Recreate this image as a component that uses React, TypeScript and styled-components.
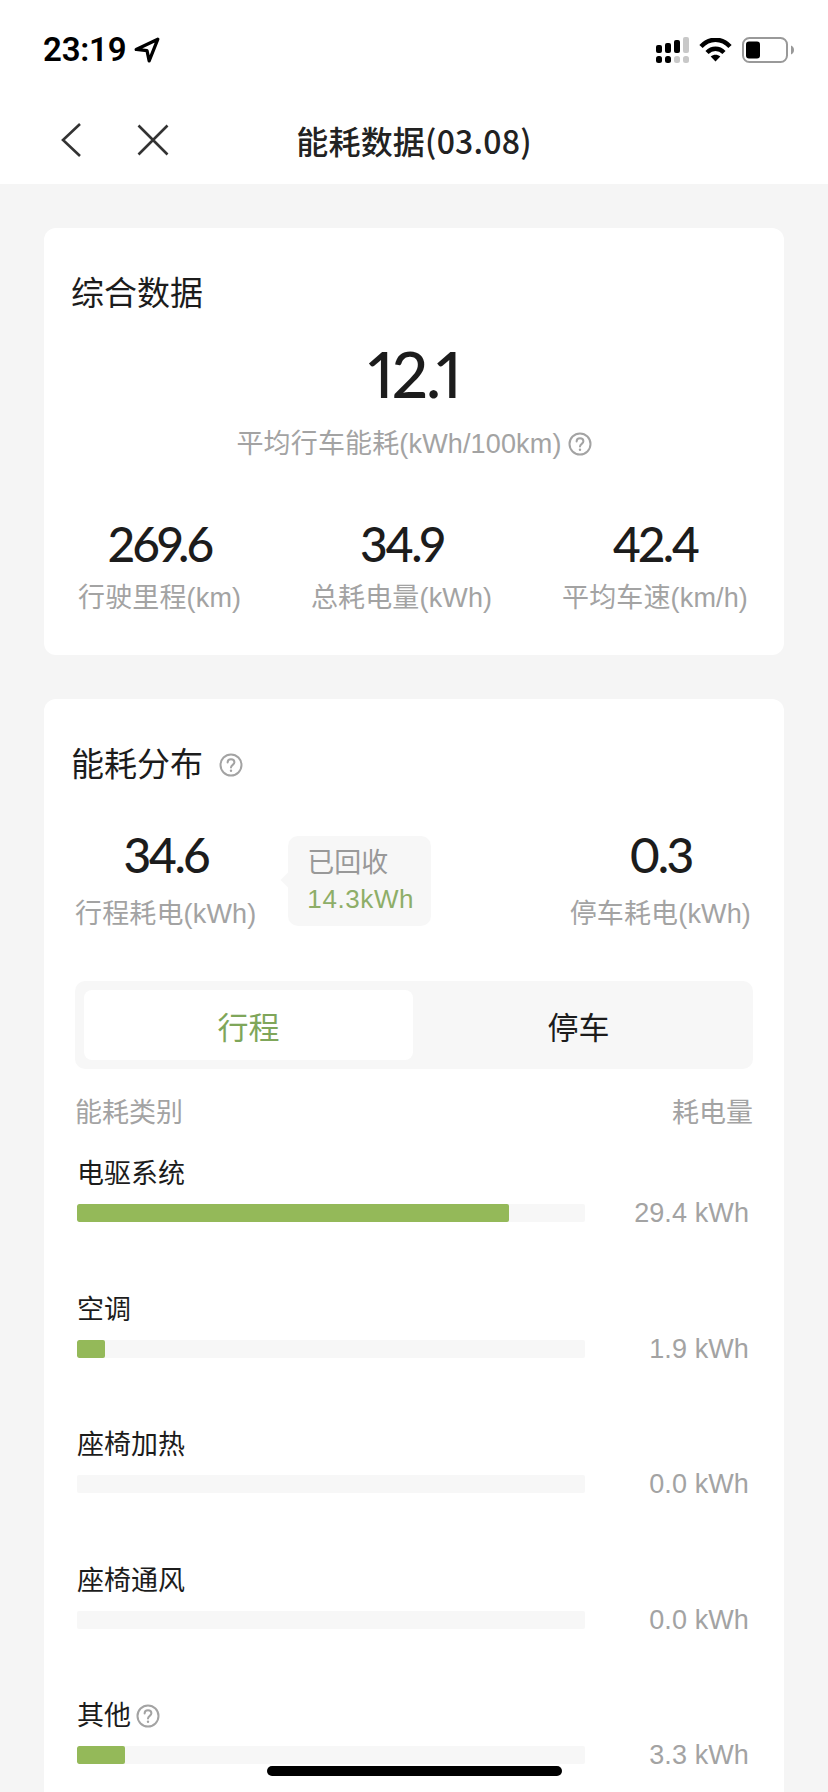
import React from "react";
import styled, { createGlobalStyle } from "styled-components";

const Global = createGlobalStyle`
  html, body { margin: 0; padding: 0; background: #f5f5f5; }
  body { font-family: "Liberation Sans", "Noto Sans CJK SC", sans-serif; color: #1c1c1c; }
  * { box-sizing: border-box; }
`;

const Screen = styled.div`
  position: relative;
  width: 828px;
  height: 1792px;
  overflow: hidden;
  background: #f5f5f5;
`;

const Header = styled.header`
  background: #fff;
  height: 184px;
  display: flex;
  flex-direction: column;
`;

const StatusBar = styled.div`
  height: 100px;
  padding: 32px 34px 0 43px;
  display: flex;
  justify-content: space-between;
  align-items: flex-start;
`;

const TimeGroup = styled.div`
  display: flex;
  align-items: center;
  gap: 8px;
  height: 36px;
`;

const Time = styled.span`
  font-family: Roboto, sans-serif;
  font-size: 33px;
  font-weight: 600;
  line-height: 36px;
  color: #000;
  letter-spacing: -0.2px;
`;

const StatusIcons = styled.div`
  display: flex;
  align-items: center;
  gap: 10px;
  height: 36px;
`;

const NavBar = styled.nav`
  flex: 1;
  display: grid;
  grid-template-columns: 1fr auto 1fr;
  align-items: center;
  padding-bottom: 4px;
`;

const NavActions = styled.div`
  display: flex;
  align-items: center;
  gap: 56px;
  padding-left: 61px;
`;

const NavTitle = styled.h1`
  margin: 0;
  font-family: "Noto Sans CJK SC", sans-serif;
  font-size: 32px;
  line-height: 44px;
  font-weight: 500;
  letter-spacing: 0.2px;
  color: #222;
`;

const Content = styled.main`
  padding: 44px 44px 0;
  display: flex;
  flex-direction: column;
  gap: 44px;
`;

const Card = styled.section`
  background: #fff;
  border-radius: 12px;
  padding: 44px 0 80px;
`;

const SummaryCard = styled(Card)`
  height: 427px;
`;

const SectionTitle = styled.h2`
  margin: 0;
  padding-left: 27px;
  display: flex;
  align-items: center;
  gap: 16px;
  font-size: 33px;
  line-height: 44px;
  font-weight: 400;
  color: #1c1c1c;
`;

const Headline = styled.div`
  margin-top: 22px;
  display: flex;
  flex-direction: column;
  align-items: center;
  gap: 16px;
`;

const BigNumber = styled.div`
  font-family: Lato, sans-serif;
  font-size: 64px;
  line-height: 72px;
  font-weight: 500;
  letter-spacing: -2px;
  font-feature-settings: "pnum";
  color: #1c1c1c;
`;

const Caption = styled.div`
  font-size: 27px;
  line-height: 36px;
  letter-spacing: 0.15px;
  color: #a3a3a3;
  white-space: nowrap;
  display: flex;
  align-items: center;
  gap: 6px;
`;

const Number = styled.div`
  font-family: Lato, sans-serif;
  font-size: 48px;
  line-height: 56px;
  font-weight: 500;
  letter-spacing: -2.6px;
  font-feature-settings: "pnum";
  color: #1c1c1c;
`;

const StatsRow = styled.div`
  margin-top: 54px;
  padding: 0 36px 0 34px;
  display: flex;
  justify-content: space-between;
`;

const Stat = styled.div`
  display: flex;
  flex-direction: column;
  align-items: center;
  gap: 8px;
`;

const SplitRow = styled.div`
  margin-top: 40px;
  padding: 0 33px 0 31px;
  display: flex;
  align-items: flex-start;
`;

const SplitStat = styled(Stat)`
  gap: 13px;
  &:last-child {
    margin-left: auto;
  }
`;

const Recovered = styled.div`
  position: relative;
  width: 143px;
  height: 90px;
  margin-left: 32px;
  margin-top: 9px;
  padding: 9px 0 0 19px;
  background: #f7f7f7;
  border-radius: 10px;
  font-size: 27px;
  line-height: 36px;

  &::before {
    content: "";
    position: absolute;
    left: -5px;
    top: 38px;
    width: 12px;
    height: 12px;
    background: #f7f7f7;
    transform: rotate(45deg);
  }
`;

const RecoveredLabel = styled.div`
  color: #999;
`;

const RecoveredValue = styled.div`
  color: #8eae68;
  font-size: 26px;
  letter-spacing: 0.6px;
`;

const Tabs = styled.div`
  margin: 49px 31px 0 31px;
  height: 88px;
  padding: 9px;
  background: #f7f7f7;
  border-radius: 10px;
  display: grid;
  grid-template-columns: 329px 1fr;
`;

const Tab = styled.div<{ $active?: boolean }>`
  display: flex;
  align-items: center;
  justify-content: center;
  border-radius: 8px;
  font-size: 31px;
  background: ${(p) => (p.$active ? "#fff" : "transparent")};
  color: ${(p) => (p.$active ? "#7fa65a" : "#1c1c1c")};
`;

const TableHead = styled.div`
  margin-top: 26px;
  padding: 0 31px;
  display: flex;
  justify-content: space-between;
  font-size: 27px;
  line-height: 36px;
  color: #a3a3a3;
`;

const Rows = styled.div`
  margin-top: 25px;
  padding: 0 35px 0 33px;
  display: flex;
  flex-direction: column;
  gap: 69.5px;
`;

const Row = styled.div`
  display: grid;
  grid-template-columns: 508px 1fr;
  grid-template-rows: 36px 18px;
  row-gap: 12px;
`;

const RowLabel = styled.div`
  grid-column: 1 / 3;
  font-size: 27px;
  line-height: 36px;
  color: #1c1c1c;
  display: flex;
  align-items: center;
  gap: 5px;
`;

const Track = styled.div`
  height: 18px;
  background: #f7f7f7;
  border-radius: 2px;
  overflow: hidden;
`;

const Fill = styled.div`
  height: 100%;
  background: #94b959;
  border-radius: 2px;
`;

const RowValue = styled.div`
  font-size: 27px;
  line-height: 18px;
  letter-spacing: 0.1px;
  color: #a3a3a3;
  text-align: right;
  white-space: nowrap;
`;

const HomeIndicator = styled.div`
  position: absolute;
  left: 267px;
  top: 1766px;
  width: 295px;
  height: 10px;
  border-radius: 5px;
  background: #000;
`;

const Help = ({ size = 24 }: { size?: number }) => (
  <svg width={size} height={size} viewBox="0 0 24 24" fill="none" stroke="#a3a3a3">
    <circle cx="12" cy="12" r="10.5" strokeWidth="2" />
    <path d="M8.6 9.6c0-2 1.5-3.3 3.4-3.3s3.4 1.2 3.4 3c0 2.6-3.4 2.6-3.4 5.3" strokeWidth="2" strokeLinecap="round" />
    <circle cx="12" cy="17.8" r="1.2" fill="#a3a3a3" stroke="none" />
  </svg>
);

const LocationArrow = () => (
  <svg width="26" height="26" viewBox="0 0 24 24" fill="none" stroke="#000" strokeWidth="3" strokeLinejoin="round">
    <path d="M22 2 2 11.5l10 1 2 9.5z" />
  </svg>
);

const Signal = () => (
  <svg width="33" height="26" viewBox="0 0 33 26" fill="#000">
    <rect x="0" y="8" width="6" height="8" rx="2" />
    <rect x="9" y="6" width="6" height="10" rx="2" />
    <rect x="18" y="3" width="6" height="13" rx="2" />
    <rect x="27" y="0" width="6" height="16" rx="2" fill="#c8c8c8" />
    <rect x="0" y="19" width="6" height="7" rx="2.5" />
    <rect x="9" y="19" width="6" height="7" rx="2.5" />
    <rect x="18" y="19" width="6" height="7" rx="2.5" fill="#c8c8c8" />
    <rect x="27" y="19" width="6" height="7" rx="2.5" fill="#c8c8c8" />
  </svg>
);

const Wifi = () => (
  <svg width="33" height="24" viewBox="0 0 33 24" fill="none" stroke="#000" strokeWidth="4.4">
    <path d="M2 8.5C10-.5 23-.5 31 8.5" />
    <path d="M8 14.5c5-5 12-5 17 0" />
    <path d="M16.5 23.6 11.7 18.6c2.8-2.4 6.800-2.400 9.600 0z" fill="#000" stroke="none" />
  </svg>
);

const Battery = () => (
  <svg width="52" height="26" viewBox="0 0 52 26">
    <rect x="1" y="1" width="44" height="24" rx="6.500" fill="none" stroke="#999" strokeWidth="2" />
    <rect x="4" y="4.500" width="14" height="17" rx="3" fill="#000" />
    <path d="M49 8.500c2 .6 3 2.400 3 4.500s-1 3.900-3 4.500z" fill="#999" />
  </svg>
);

const Back = () => (
  <svg width="20" height="34" viewBox="0 0 20 34" fill="none" stroke="#333" strokeWidth="2.600">
    <path d="M19 1 2 17l17 16" />
  </svg>
);

const Close = () => (
  <svg width="32" height="32" viewBox="0 0 32 32" fill="none" stroke="#333" strokeWidth="2.600">
    <path d="M1.500 1.500l29 29M30.500 1.500l-29 29" />
  </svg>
);

const categories = [
  { name: "电驱系统", value: "29.4 kWh", width: 432 },
  { name: "空调", value: "1.9 kWh", width: 28 },
  { name: "座椅加热", value: "0.0 kWh", width: 0 },
  { name: "座椅通风", value: "0.0 kWh", width: 0 },
  { name: "其他", value: "3.3 kWh", width: 48, help: true },
];

export default function App() {
  return (
    <Screen>
      <Global />
      <Header>
        <StatusBar>
          <TimeGroup>
            <Time>23:19</Time>
            <LocationArrow />
          </TimeGroup>
          <StatusIcons>
            <Signal />
            <Wifi />
            <Battery />
          </StatusIcons>
        </StatusBar>
        <NavBar>
          <NavActions>
            <Back />
            <Close />
          </NavActions>
          <NavTitle>能耗数据(03.08)</NavTitle>
          <span />
        </NavBar>
      </Header>
      <Content>
        <SummaryCard>
          <SectionTitle>综合数据</SectionTitle>
          <Headline>
            <BigNumber>12.1</BigNumber>
            <Caption>
              平均行车能耗(kWh/100km)
              <Help />
            </Caption>
          </Headline>
          <StatsRow>
            <Stat>
              <Number>269.6</Number>
              <Caption>行驶里程(km)</Caption>
            </Stat>
            <Stat>
              <Number>34.9</Number>
              <Caption>总耗电量(kWh)</Caption>
            </Stat>
            <Stat>
              <Number>42.4</Number>
              <Caption>平均车速(km/h)</Caption>
            </Stat>
          </StatsRow>
        </SummaryCard>
        <Card>
          <SectionTitle>
            能耗分布
            <Help />
          </SectionTitle>
          <SplitRow>
            <SplitStat>
              <Number>34.6</Number>
              <Caption>行程耗电(kWh)</Caption>
            </SplitStat>
            <Recovered>
              <RecoveredLabel>已回收</RecoveredLabel>
              <RecoveredValue>14.3kWh</RecoveredValue>
            </Recovered>
            <SplitStat>
              <Number>0.3</Number>
              <Caption>停车耗电(kWh)</Caption>
            </SplitStat>
          </SplitRow>
          <Tabs>
            <Tab $active>行程</Tab>
            <Tab>停车</Tab>
          </Tabs>
          <TableHead>
            <span>能耗类别</span>
            <span>耗电量</span>
          </TableHead>
          <Rows>
            {categories.map((c) => (
              <Row key={c.name}>
                <RowLabel>
                  {c.name}
                  {c.help && <Help />}
                </RowLabel>
                <Track>
                  <Fill style={{ width: c.width }} />
                </Track>
                <RowValue>{c.value}</RowValue>
              </Row>
            ))}
          </Rows>
        </Card>
      </Content>
      <HomeIndicator />
    </Screen>
  );
}
